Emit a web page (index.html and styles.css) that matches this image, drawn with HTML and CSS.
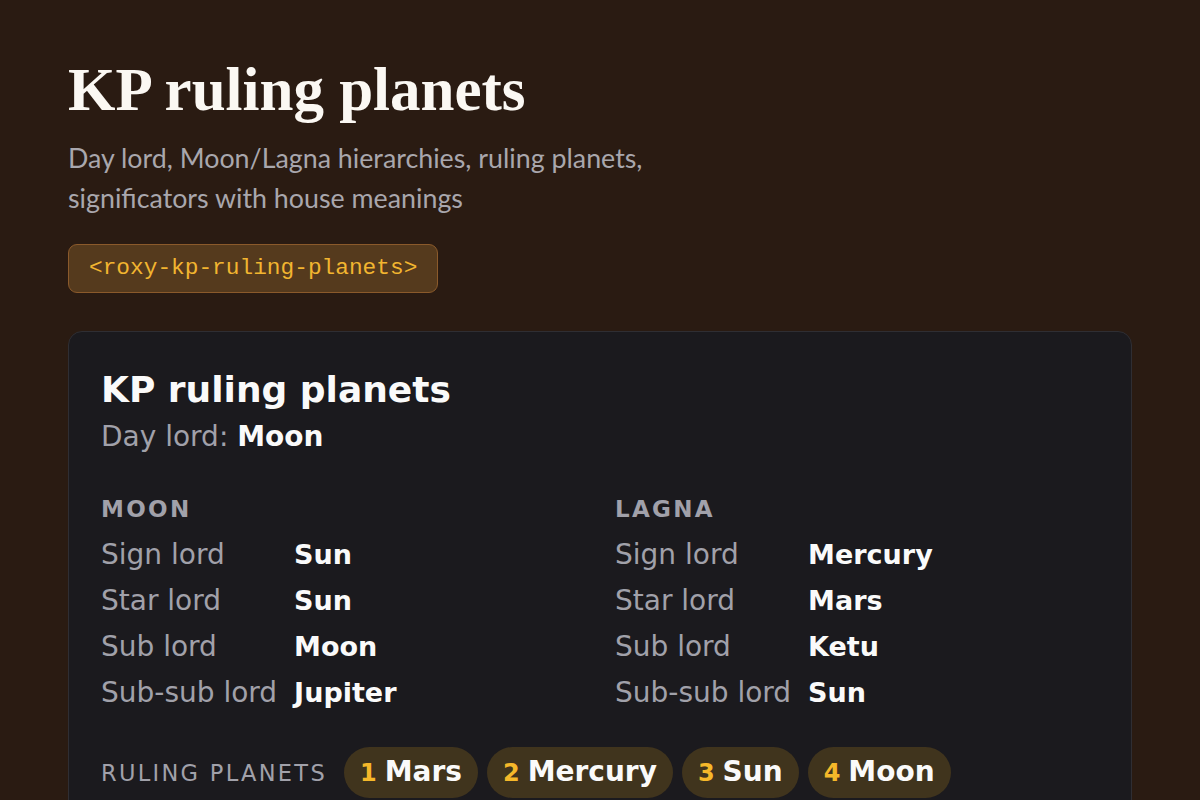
FILE: index.html
```html
<!DOCTYPE html>
<html lang="en">
<head>
<meta charset="utf-8">
<title>KP ruling planets</title>
<link rel="stylesheet" href="styles.css">
</head>
<body>
<main class="page">
  <header class="intro">
    <h1 class="page-title">KP ruling planets</h1>
    <p class="page-sub">Day lord, Moon/Lagna hierarchies, ruling planets, significators with house meanings</p>
    <code class="tag">&lt;roxy-kp-ruling-planets&gt;</code>
  </header>

  <section class="card">
    <h2 class="card-title">KP ruling planets</h2>
    <p class="day-lord">Day lord: <strong>Moon</strong></p>

    <div class="hier">
      <div class="hier-col">
        <h3 class="hier-head">Moon</h3>
        <dl class="lords">
          <dt>Sign lord</dt><dd>Sun</dd>
          <dt>Star lord</dt><dd>Sun</dd>
          <dt>Sub lord</dt><dd>Moon</dd>
          <dt>Sub-sub lord</dt><dd>Jupiter</dd>
        </dl>
      </div>
      <div class="hier-col">
        <h3 class="hier-head">Lagna</h3>
        <dl class="lords">
          <dt>Sign lord</dt><dd>Mercury</dd>
          <dt>Star lord</dt><dd>Mars</dd>
          <dt>Sub lord</dt><dd>Ketu</dd>
          <dt>Sub-sub lord</dt><dd>Sun</dd>
        </dl>
      </div>
    </div>

    <div class="ruling">
      <span class="ruling-label">Ruling planets</span>
      <ul class="chips">
        <li class="chip"><span class="chip-num">1</span><span class="chip-name">Mars</span></li>
        <li class="chip"><span class="chip-num">2</span><span class="chip-name">Mercury</span></li>
        <li class="chip"><span class="chip-num">3</span><span class="chip-name">Sun</span></li>
        <li class="chip"><span class="chip-num">4</span><span class="chip-name">Moon</span></li>
      </ul>
    </div>
  </section>
</main>
</body>
</html>
```

FILE: styles.css
```css
html, body {
  margin: 0;
  padding: 0;
  background: #2a1b12;
}

body {
  font-family: "DejaVu Sans", sans-serif;
  color: #fafafa;
}

.page {
  padding: 57px 68px 40px;
}

.intro {
  display: flex;
  flex-direction: column;
  align-items: flex-start;
}

.page-title {
  margin: 0;
  font-family: "Liberation Serif", serif;
  font-weight: 700;
  font-size: 61px;
  line-height: 66px;
  color: #fbf8f3;
}

.page-sub {
  margin: 15px 0 0;
  max-width: 700px;
  font-family: "Lato", sans-serif;
  font-size: 26.8px;
  line-height: 40px;
  color: #a9a7ad;
}

.tag {
  margin-top: 26px;
  display: inline-block;
  padding: 8px 20px;
  font-family: "Liberation Mono", monospace;
  font-size: 22.8px;
  line-height: 31px;
  color: #f2b530;
  background: #553a1d;
  border: 1px solid #8b5a2b;
  border-radius: 9px;
}

.card {
  margin-top: 38px;
  padding: 36px 32px 40px;
  background: #1b1a1e;
  border: 1px solid #2f2e33;
  border-radius: 14px;
}

.card-title {
  margin: 0;
  font-size: 36px;
  line-height: 43px;
  font-weight: 700;
  color: #fafafa;
}

.day-lord {
  margin: 7px 0 0;
  font-size: 28px;
  line-height: 38px;
  color: #a1a1aa;
}

.day-lord strong {
  color: #fafafa;
  font-weight: 700;
}

.hier {
  margin-top: 38px;
  display: grid;
  grid-template-columns: 1fr 1fr;
  column-gap: 30px;
}

.hier-head {
  margin: 0;
  font-size: 23px;
  line-height: 31px;
  font-weight: 700;
  text-transform: uppercase;
  letter-spacing: 2.3px;
  color: #a1a1aa;
}

.lords {
  margin: 7px 0 0;
  display: grid;
  grid-template-columns: max-content 1fr;
  column-gap: 17px;
  font-size: 28px;
  line-height: 46px;
}

.lords dt {
  color: #a1a1aa;
}

.lords dd {
  margin: 0;
  font-size: 27px;
  font-weight: 700;
  color: #fafafa;
}

.ruling {
  margin-top: 31px;
  display: flex;
  align-items: center;
  gap: 17px;
}

.ruling-label {
  font-size: 22.5px;
  text-transform: uppercase;
  letter-spacing: 2.3px;
  color: #a1a1aa;
}

.chips {
  margin: 0;
  padding: 0;
  list-style: none;
  display: flex;
  gap: 9px;
}

.chip {
  display: flex;
  align-items: baseline;
  gap: 8px;
  padding: 8px 16px;
  background: #40341d;
  border-radius: 999px;
  line-height: 33px;
}

.chip-num {
  font-size: 24px;
  font-weight: 700;
  color: #f5b82a;
}

.chip-name {
  font-size: 28px;
  font-weight: 700;
  color: #fafafa;
}
```
